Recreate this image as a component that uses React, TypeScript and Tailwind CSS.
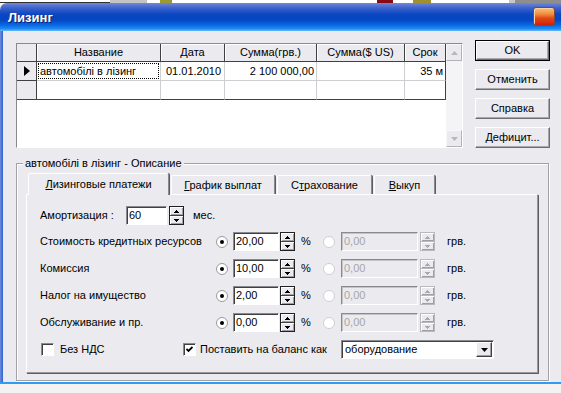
import React from "react";

const FACE = "bg-[#ebeaee]";

function Arrow({ up, color }: { up?: boolean; color: string }) {
  return (
    <svg width="5" height="3" viewBox="0 0 5 3" shapeRendering="crispEdges">
      {up ? (
        <>
          <rect x="2" y="0" width="1" height="1" fill={color} />
          <rect x="1" y="1" width="3" height="1" fill={color} />
          <rect x="0" y="2" width="5" height="1" fill={color} />
        </>
      ) : (
        <>
          <rect x="0" y="0" width="5" height="1" fill={color} />
          <rect x="1" y="1" width="3" height="1" fill={color} />
          <rect x="2" y="2" width="1" height="1" fill={color} />
        </>
      )}
    </svg>
  );
}

function Spin({ disabled }: { disabled?: boolean }) {
  const c = disabled ? "#a9a9ad" : "#000";
  return (
    <div
      className={`flex h-[19px] w-[15px] flex-col border ${
        disabled ? "border-[#b9b8bc]" : "border-[#202020]"
      } ${FACE}`}
    >
      <div
        className={`flex flex-1 items-center justify-center border-b ${
          disabled ? "border-[#b9b8bc]" : "border-[#404040]"
        } shadow-[inset_1px_1px_0_#ffffff,inset_-1px_-1px_0_#a0a0a4]`}
      >
        <Arrow up color={c} />
      </div>
      <div className="flex flex-1 items-center justify-center shadow-[inset_1px_1px_0_#ffffff,inset_-1px_-1px_0_#a0a0a4]">
        <Arrow color={c} />
      </div>
    </div>
  );
}

function Field({ value, w, disabled }: { value: string; w: string; disabled?: boolean }) {
  return (
    <div
      className={`flex h-[19px] ${w} items-center border border-t-[#8a8a8e] border-l-[#8a8a8e] border-r-white border-b-white pl-[2px] ${
        disabled
          ? "bg-[#ebeaee] text-[#a6a6aa] shadow-[inset_1px_1px_0_#c4c4c8]"
          : "bg-white text-black shadow-[inset_1px_1px_0_#404040]"
      }`}
    >
      {value}
    </div>
  );
}

function Radio({ checked, disabled }: { checked?: boolean; disabled?: boolean }) {
  return (
    <svg width="12" height="12" viewBox="0 0 12 12">
      <circle cx="6" cy="6" r="5.5" fill="#ffffff" stroke={disabled ? "#cfcfd3" : "#9a9a9e"} />
      {checked && <circle cx="6" cy="6" r="2" fill="#000" />}
    </svg>
  );
}

function Check({ checked }: { checked?: boolean }) {
  return (
    <div className="flex h-[13px] w-[13px] items-center justify-center border border-t-[#8a8a8e] border-l-[#8a8a8e] border-r-white border-b-white bg-white shadow-[inset_1px_1px_0_#404040]">
      {checked && (
        <svg width="7" height="7" viewBox="0 0 7 7">
          <path d="M0.5 3 L2.5 5 L6.5 1" stroke="#000" strokeWidth="1.8" fill="none" />
        </svg>
      )}
    </div>
  );
}

function Btn({ children, def }: { children: React.ReactNode; def?: boolean }) {
  return (
    <div className={`flex h-[21px] w-[75px] ${def ? "border border-black" : ""}`}>
      <div
        className={`flex h-full w-full items-center justify-center border border-t-white border-l-white border-r-[#6e6e72] border-b-[#6e6e72] ${FACE} shadow-[inset_-1px_-1px_0_#a8a8ac]`}
      >
        {children}
      </div>
    </div>
  );
}

function Tab({ children, w, active }: { children: React.ReactNode; w: string; active?: boolean }) {
  return (
    <div
      className={`flex ${w} items-center justify-center rounded-t-[2px] border-l border-t border-l-white border-t-white border-r border-r-[#8a8a8e] ${FACE} shadow-[1px_0_0_#5e5e62] ${
        active ? "relative z-10 -mb-px h-[22px]" : "h-[19px]"
      }`}
    >
      {children}
    </div>
  );
}

const cols = [
  { w: "w-[124px]", h: "Название" },
  { w: "w-[64px]", h: "Дата" },
  { w: "w-[92px]", h: "Сумма(грв.)" },
  { w: "w-[88px]", h: "Сумма($ US)" },
  { w: "w-[41px]", h: "Срок" },
];

const rows = [
  { label: "Стоимость кредитных ресурсов", v: "20,00" },
  { label: "Комиссия", v: "10,00" },
  { label: "Налог на имущество", v: "2,00" },
  { label: "Обслуживание и пр.", v: "0,00" },
];

export default function App() {
  return (
    <div className="flex h-[393px] w-[561px] flex-col overflow-hidden bg-[#f3f3f3] font-['Liberation_Sans',Arial,sans-serif] text-[11px] leading-[13px] text-black">
      {/* strip of window behind */}
      <div className="flex h-[3px] shrink-0">
        <div className="w-[110px] bg-white border-b border-[#303030]" />
        <div className="w-[37px] bg-[#c4c4c4]" />
        <div className="w-[13px] bg-white" />
        <div className="w-[12px] bg-[#9a9a30]" />
        <div className="w-[205px] bg-white" />
        <div className="w-[16px] bg-[#8a0a14]" />
        <div className="w-[20px] bg-white" />
        <div className="w-[18px] bg-[#a09030]" />
        <div className="w-[78px] bg-white" />
        <div className="w-[6px] bg-[#c8c8c8]" />
        <div className="flex-1 bg-[#8e8e8e]" />
      </div>

      {/* window */}
      <div className="flex h-[381px] shrink-0 flex-col overflow-hidden rounded-tl-[7px]">
        {/* title bar */}
        <div className="flex h-[28px] shrink-0 items-center bg-[linear-gradient(to_bottom,#7088d8_0%,#3c62cc_18%,#0c46c0_40%,#0446c4_60%,#0a66e0_78%,#1c8cf6_92%,#6ab8ff_100%)] pl-[8px] pr-[6px]">
          <span className="text-[13px] font-bold text-white [text-shadow:1px_1px_0_#0a1e70]">Лизинг</span>
          <div className="ml-auto mb-[2px] h-[19px] w-[22px] rounded-[3px] border border-[#7a4a38] bg-[linear-gradient(to_bottom,#f8c080_0%,#f0903c_35%,#e04818_60%,#d02008_100%)] shadow-[inset_1px_1px_0_#ffd0a0]" />
        </div>

        {/* body */}
        <div className="flex min-h-0 flex-1">
          <div className="w-[3px] shrink-0 bg-[linear-gradient(to_right,#6f8fd8,#2f5fd4)]" />
          <div className={`flex flex-1 flex-col ${FACE}`}>
            {/* top: grid + buttons */}
            <div className="flex items-start pl-[13px]">
              <div className="mt-[12px] flex h-[105px] w-[447px] border border-t-[#8a8a8e] border-l-[#8a8a8e] border-r-white border-b-white">
                <div className="flex flex-1 flex-col bg-white">
                  {/* header */}
                  <div className="flex h-[18px]">
                    <div className={`h-full w-[20px] border-r border-b border-[#404040] ${FACE}`} />
                    {cols.map((c) => (
                      <div
                        key={c.h}
                        className={`flex h-full ${c.w} items-center justify-center border-r border-b border-[#404040] ${FACE} shadow-[inset_1px_1px_0_#ffffff]`}
                      >
                        {c.h}
                      </div>
                    ))}
                  </div>
                  {/* row 1 */}
                  <div className="flex h-[19px]">
                    <div className={`flex h-full w-[20px] items-center justify-center border-r border-b border-[#404040] ${FACE}`}>
                      <svg width="6" height="10" viewBox="0 0 6 10">
                        <path d="M0 0 L6 5 L0 10 Z" fill="#000" />
                      </svg>
                    </div>
                    <div className="flex h-full w-[124px] items-center border-r border-b border-[#cfcfd3] p-[1px]">
                      <div className="flex h-full w-full items-center border border-dotted border-black pl-[1px]">
                        автомобілі в лізинг
                      </div>
                    </div>
                    <div className="flex h-full w-[64px] items-center border-r border-b border-[#cfcfd3] pl-[5px]">01.01.2010</div>
                    <div className="flex h-full w-[92px] items-center justify-end border-r border-b border-[#cfcfd3] pr-[2px]">2 100 000,00</div>
                    <div className="h-full w-[88px] border-r border-b border-[#cfcfd3]" />
                    <div className="flex h-full w-[41px] items-center justify-end border-r border-r-[#404040] border-b border-b-[#cfcfd3] pr-[2px]">35 м</div>
                  </div>
                  {/* row 2 */}
                  <div className="flex h-[19px]">
                    <div className={`h-full w-[20px] border-r border-b border-[#404040] ${FACE}`} />
                    <div className="h-full w-[124px] border-r border-r-[#cfcfd3] border-b border-b-[#404040]" />
                    <div className="h-full w-[64px] border-r border-r-[#cfcfd3] border-b border-b-[#404040]" />
                    <div className="h-full w-[92px] border-r border-r-[#cfcfd3] border-b border-b-[#404040]" />
                    <div className="h-full w-[88px] border-r border-r-[#cfcfd3] border-b border-b-[#404040]" />
                    <div className="h-full w-[41px] border-r border-b border-[#404040]" />
                  </div>
                </div>
                {/* scrollbar */}
                <div className="flex w-[16px] flex-col bg-[#f4f3f6]">
                  <div className={`flex h-[17px] items-center justify-center border border-t-[#f8f8fa] border-l-[#f8f8fa] border-r-[#b4b4b8] border-b-[#b4b4b8] ${FACE}`}>
                    <svg width="7" height="4" viewBox="0 0 7 4">
                      <path d="M0 4 L3.5 0 L7 4 Z" fill="#b8b8bc" />
                    </svg>
                  </div>
                  <div className="flex-1" />
                  <div className={`flex h-[17px] items-center justify-center border border-t-[#f8f8fa] border-l-[#f8f8fa] border-r-[#b4b4b8] border-b-[#b4b4b8] ${FACE}`}>
                    <svg width="7" height="4" viewBox="0 0 7 4">
                      <path d="M0 0 L3.5 4 L7 0 Z" fill="#b8b8bc" />
                    </svg>
                  </div>
                </div>
              </div>

              <div className="ml-[12px] mt-[9px] flex flex-col gap-[8px]">
                <Btn def>OK</Btn>
                <Btn>Отменить</Btn>
                <Btn>Справка</Btn>
                <Btn>Дефицит...</Btn>
              </div>
            </div>

            {/* group box */}
            <div className="relative ml-[13px] mt-[15px] h-[218px] w-[533px] border border-[#a2a1a6] shadow-[inset_1px_1px_0_#ffffff,1px_1px_0_#ffffff]">
              <span className={`absolute left-[6px] top-[-7px] px-[2px] ${FACE}`}>автомобілі в лізинг - Описание</span>

              <div className="ml-[9px] mt-[9px] flex flex-col">
                {/* tabs */}
                <div className="flex h-[21px] items-end gap-[2px] pl-[2px]">
                  <Tab active w="w-[141px]">
                    <span>
                      <span className="underline">Л</span>изинговые платежи
                    </span>
                  </Tab>
                  <Tab w="w-[104px]">
                    <span>
                      <span className="underline">Г</span>рафик выплат
                    </span>
                  </Tab>
                  <Tab w="w-[95px]">
                    <span>
                      С<span className="underline">т</span>рахование
                    </span>
                  </Tab>
                  <Tab w="w-[61px]">
                    <span>
                      <span className="underline">В</span>ыкуп
                    </span>
                  </Tab>
                </div>

                {/* panel */}
                <div className={`flex h-[179px] w-[512px] flex-col border-l border-t border-l-white border-t-white border-r border-b border-r-[#98989c] border-b-[#98989c] shadow-[1px_1px_0_#5e5e62] ${FACE} pl-[13px] pt-[11px]`}>
                  <div className="flex h-[19px] items-center">
                    <span className="w-[86px]">Амортизация :</span>
                    <Field value="60" w="w-[41px]" />
                    <div className="ml-[2px]">
                      <Spin />
                    </div>
                    <span className="ml-[9px]">мес.</span>
                  </div>

                  <div className="mt-[7px] flex flex-col gap-[8px]">
                    {rows.map((r) => (
                      <div key={r.label} className="flex h-[19px] items-center">
                        <span className="w-[176px]">{r.label}</span>
                        <Radio checked />
                        <div className="ml-[5px]">
                          <Field value={r.v} w="w-[46px]" />
                        </div>
                        <div className="ml-[1px]">
                          <Spin />
                        </div>
                        <span className="ml-[6px] w-[22px]">%</span>
                        <Radio disabled />
                        <div className="ml-[6px]">
                          <Field value="0,00" w="w-[77px]" disabled />
                        </div>
                        <div className="ml-[2px]">
                          <Spin disabled />
                        </div>
                        <span className="ml-[12px]">грв.</span>
                      </div>
                    ))}
                  </div>

                  <div className="mt-[8px] flex h-[19px] items-center">
                    <div className="flex w-[143px] items-center">
                      <div className="ml-[1px]">
                        <Check />
                      </div>
                      <span className="ml-[6px]">Без НДС</span>
                    </div>
                    <Check checked />
                    <span className="ml-[4px] w-[141px]">Поставить на баланс как</span>
                    <div className="flex h-[19px] w-[153px] items-center border border-t-[#8a8a8e] border-l-[#8a8a8e] border-r-white border-b-white bg-white pl-[3px] shadow-[inset_1px_1px_0_#404040]">
                      <span className="flex-1">оборудование</span>
                      <div className={`mr-[1px] flex h-[15px] w-[16px] items-center justify-center border border-t-white border-l-white border-r-[#404040] border-b-[#404040] ${FACE} shadow-[inset_-1px_-1px_0_#a0a0a4]`}>
                        <svg width="7" height="4" viewBox="0 0 7 4">
                          <path d="M0 0 L7 0 L3.5 4 Z" fill="#000" />
                        </svg>
                      </div>
                    </div>
                  </div>
                </div>
              </div>
            </div>
          </div>
        </div>

        <div className="h-[2px] shrink-0 bg-[#2e9cf6]" />
      </div>

      <div className="flex-1 bg-[#f3f3f3]" />
    </div>
  );
}
